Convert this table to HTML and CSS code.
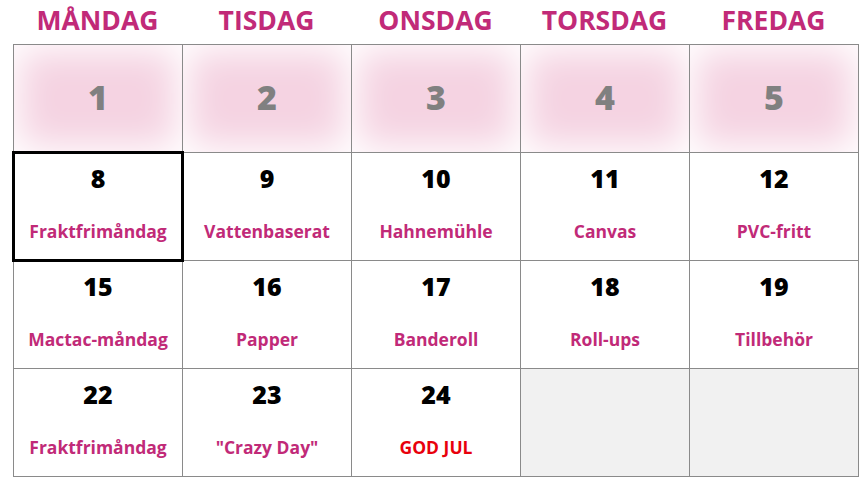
FILE: index.html
```html
<!DOCTYPE html>
<html lang="sv">
<head>
<meta charset="utf-8">
<link rel="stylesheet" href="styles.css">
</head>
<body>
<div class="cal">
  <div class="heads">
    <div class="head">MÅNDAG</div>
    <div class="head">TISDAG</div>
    <div class="head">ONSDAG</div>
    <div class="head">TORSDAG</div>
    <div class="head">FREDAG</div>
  </div>
  <div class="grid">
    <div class="cell past"><span class="pnum">1</span></div>
    <div class="cell past"><span class="pnum">2</span></div>
    <div class="cell past"><span class="pnum">3</span></div>
    <div class="cell past"><span class="pnum">4</span></div>
    <div class="cell past"><span class="pnum">5</span></div>

    <div class="cell day today"><span class="num">8</span><span class="lbl">Fraktfrimåndag</span></div>
    <div class="cell day"><span class="num">9</span><span class="lbl">Vattenbaserat</span></div>
    <div class="cell day"><span class="num">10</span><span class="lbl">Hahnemühle</span></div>
    <div class="cell day"><span class="num">11</span><span class="lbl">Canvas</span></div>
    <div class="cell day"><span class="num">12</span><span class="lbl">PVC-fritt</span></div>

    <div class="cell day"><span class="num">15</span><span class="lbl">Mactac-måndag</span></div>
    <div class="cell day"><span class="num">16</span><span class="lbl">Papper</span></div>
    <div class="cell day"><span class="num">17</span><span class="lbl">Banderoll</span></div>
    <div class="cell day"><span class="num">18</span><span class="lbl">Roll-ups</span></div>
    <div class="cell day"><span class="num">19</span><span class="lbl">Tillbehör</span></div>

    <div class="cell day"><span class="num">22</span><span class="lbl">Fraktfrimåndag</span></div>
    <div class="cell day"><span class="num">23</span><span class="lbl">"Crazy Day"</span></div>
    <div class="cell day"><span class="num">24</span><span class="lbl red">GOD JUL</span></div>
    <div class="cell empty"></div>
    <div class="cell empty"></div>
  </div>
</div>
</body>
</html>
```
FILE: styles.css
```css
html, body {
  margin: 0;
  padding: 0;
  background: #fff;
}
body {
  font-family: "Open Sans", "DejaVu Sans", sans-serif;
}
.cal {
  padding-left: 13px;
  width: 846px;
}
.heads {
  display: grid;
  grid-template-columns: repeat(5, 169px);
  height: 44px;
  align-items: center;
}
.head {
  text-align: center;
  font-weight: 700;
  font-size: 26.5px;
  color: #c12a78;
  line-height: 40px;
  padding-bottom: 5px;
}
.grid {
  display: grid;
  grid-template-columns: repeat(5, 168px);
  grid-auto-rows: 107px;
  gap: 1px;
  background: #8a8a8a;
  border: 1px solid #8a8a8a;
  width: 844px;
}
.cell {
  background: #fff;
  position: relative;
}
.past {
  display: flex;
  align-items: center;
  justify-content: center;
  background: #f5d3e2;
  box-shadow: inset 0 0 36px 6px #fff;
}
.pnum {
  font-size: 34px;
  font-weight: 800;
  color: #808080;
  line-height: 40px;
  padding-bottom: 3px;
}
.day {
  display: flex;
  flex-direction: column;
  align-items: center;
  padding-top: 9px;
  box-sizing: border-box;
}
.num {
  font-size: 25px;
  font-weight: 800;
  color: #000;
  line-height: 32px;
}
.lbl {
  margin-top: 26px;
  font-size: 17.5px;
  font-weight: 700;
  color: #c12a78;
  line-height: 22px;
}
.lbl.red {
  color: #e8000c;
}
.today {
  z-index: 1;
}
.today::after {
  content: "";
  position: absolute;
  left: -2px;
  top: -2px;
  right: -2px;
  bottom: -2px;
  border: 3px solid #000;
}
.empty {
  background: #f1f1f1;
}
```
